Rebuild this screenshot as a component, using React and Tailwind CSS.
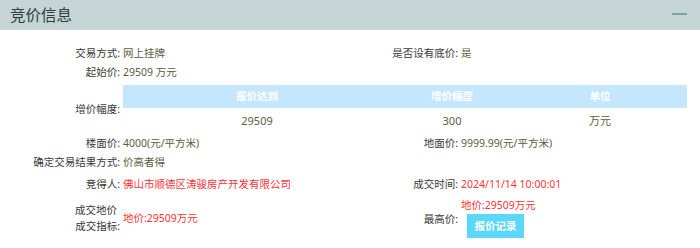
const font = { fontFamily: '"Noto Sans", "Noto Sans CJK SC", sans-serif' }

// bid increment table rows
const increments = [{ reach: '29509', step: '300', unit: '万元' }]

function Label({ children, className = '' }) {
  return (
    <div className={`text-right text-[#383838] ${className}`}>{children}</div>
  )
}

export default function App() {
  return (
    <div className="w-[700px] h-[248px] bg-white text-[10.5px] leading-[15px] overflow-hidden" style={font}>
      {/* ── HEADER ─────────────────────────────── */}
      <div className="h-[30px] bg-[#c5d4d4] flex items-center justify-between pl-[10px] pr-[13px]">
        <span className="text-[15.5px] text-[#2f3f3f]">竞价信息</span>
        <span className="block w-[15px] h-[2px] bg-[#7fa39a] mb-[2px]" />
      </div>

      <div className="pt-[14px]">
        {/* row 1 */}
        <div className="flex h-[19px] items-center">
          <Label className="w-[120px]">交易方式:</Label>
          <div className="w-[228px] pl-[3px] text-[#5c5c3e]">网上挂牌</div>
          <Label className="w-[110px]">是否设有底价:</Label>
          <div className="pl-[3px] text-[#5c5c3e]">是</div>
        </div>

        {/* row 2 */}
        <div className="flex h-[19px] items-center">
          <Label className="w-[120px]">起始价:</Label>
          <div className="pl-[3px] text-[#5c5c3e]">29509 万元</div>
        </div>

        {/* increment table */}
        <div className="flex items-center mt-[3px] mb-[1px]">
          <Label className="w-[120px]">增价幅度:</Label>
          <div className="ml-[3px] w-[564px]">
            <div className="grid grid-cols-[268px_122px_174px] h-[23px] bg-[#c5e7fd] text-white font-bold items-center text-center">
              <span>报价达到</span>
              <span>增价幅度</span>
              <span>单位</span>
            </div>
            {increments.map((r) => (
              <div key={r.reach} className="grid grid-cols-[268px_122px_174px] h-[25px] items-center text-center text-[#5c5c3e] text-[11px]">
                <span>{r.reach}</span>
                <span>{r.step}</span>
                <span>{r.unit}</span>
              </div>
            ))}
          </div>
        </div>

        {/* floor / land price */}
        <div className="flex h-[19px] items-center">
          <Label className="w-[120px]">楼面价:</Label>
          <div className="w-[228px] pl-[3px] text-[#5c5c3e]">4000(元/平方米)</div>
          <Label className="w-[110px]">地面价:</Label>
          <div className="pl-[3px] text-[#5c5c3e]">9999.99(元/平方米)</div>
        </div>

        <div className="flex h-[19px] items-center">
          <Label className="w-[120px]">确定交易结果方式:</Label>
          <div className="pl-[3px] text-[#5c5c3e]">价高者得</div>
        </div>

        {/* winner */}
        <div className="flex h-[24px] items-center">
          <Label className="w-[120px]">竞得人:</Label>
          <div className="w-[228px] pl-[3px] text-[#ff3333]">佛山市顺德区涛骏房产开发有限公司</div>
          <Label className="w-[110px]">成交时间:</Label>
          <div className="pl-[3px] text-[#ff3333]">2024/11/14 10:00:01</div>
        </div>

        {/* deal price */}
        <div className="flex h-[44px] items-center">
          <Label className="w-[120px] leading-[16px]">
            <span className="pr-[3px]">成交地价</span>
            <br />
            成交指标:
          </Label>
          <div className="w-[228px] pl-[3px] text-[#ff3333]">地价:29509万元</div>
          <Label className="w-[110px] mt-[2px]">最高价:</Label>
          <div className="pl-[3px] flex flex-col items-start">
            <span className="text-[#ff3333]">地价:29509万元</span>
            <button className="ml-[6px] mt-[1px] w-[57px] h-[24px] bg-[#5ad8fa] text-white font-bold text-[10.5px]">
              报价记录
            </button>
          </div>
        </div>
      </div>
    </div>
  )
}
